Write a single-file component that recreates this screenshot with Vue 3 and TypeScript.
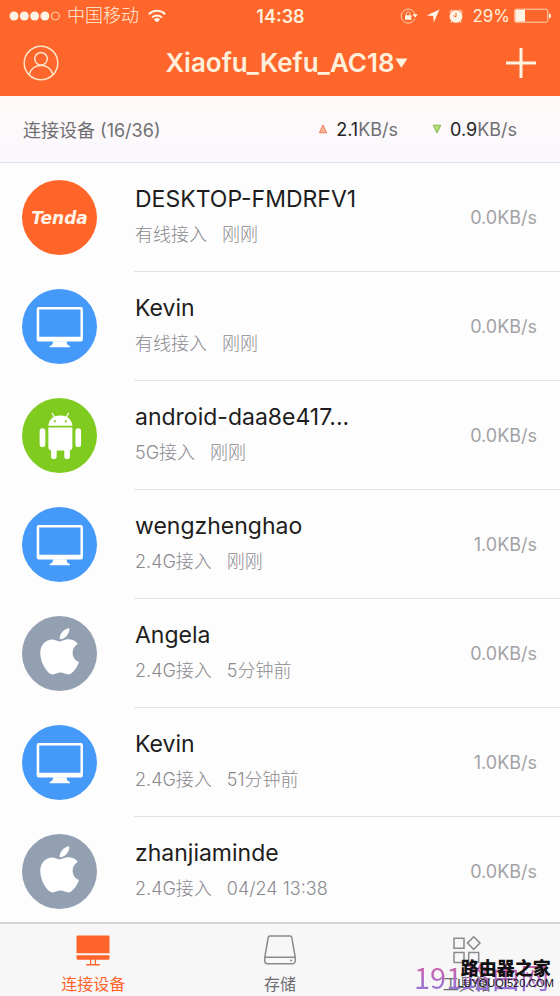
<script setup lang="ts">
import { ref } from 'vue'

type Kind = 'tenda' | 'desktop' | 'android' | 'apple'

interface Device {
  id: number
  name: string
  kind: Kind
  access: string
  seen: string
  rate: string
}

const devices: Device[] = [
  { id: 1, name: 'DESKTOP-FMDRFV1', kind: 'tenda', access: '有线接入', seen: '刚刚', rate: '0.0KB/s' },
  { id: 2, name: 'Kevin', kind: 'desktop', access: '有线接入', seen: '刚刚', rate: '0.0KB/s' },
  { id: 3, name: 'android-daa8e417...', kind: 'android', access: '5G接入', seen: '刚刚', rate: '0.0KB/s' },
  { id: 4, name: 'wengzhenghao', kind: 'desktop', access: '2.4G接入', seen: '刚刚', rate: '1.0KB/s' },
  { id: 5, name: 'Angela', kind: 'apple', access: '2.4G接入', seen: '5分钟前', rate: '0.0KB/s' },
  { id: 6, name: 'Kevin', kind: 'desktop', access: '2.4G接入', seen: '51分钟前', rate: '1.0KB/s' },
  { id: 7, name: 'zhanjiaminde', kind: 'apple', access: '2.4G接入', seen: '04/24 13:38', rate: '0.0KB/s' },
]

const tabs = ['连接设备', '存储', '工具箱']
const activeTab = ref(0)
</script>

<template>
  <div class="app">
    <header class="top">
      <div class="status">
        <div class="status-side">
          <svg class="dots" width="52" height="12" viewBox="0 0 52 12" aria-hidden="true">
            <circle cx="5" cy="6" r="4.5" /><circle cx="15.3" cy="6" r="4.5" />
            <circle cx="25.6" cy="6" r="4.5" /><circle cx="35.9" cy="6" r="4.5" />
            <circle class="hollow" cx="46.4" cy="6" r="4" />
          </svg>
          <span class="carrier">中国移动</span>
          <svg width="20" height="14" viewBox="0 0 20 14" aria-hidden="true">
            <path class="wave" d="M1.8 5.2a11.7 11.7 0 0 1 16.4 0M5 8.6a7.2 7.2 0 0 1 10 0" />
            <path class="solid" d="M10 13.6 6.9 10.5a4.5 4.5 0 0 1 6.2 0z" />
          </svg>
        </div>
        <span class="clock">14:38</span>
        <div class="status-side right">
          <svg width="18" height="16" viewBox="0 0 18 16" aria-hidden="true">
            <path class="thin" d="M14.8 10.6A7 7 0 1 1 15 6.2" />
            <path class="solid" d="M12.4 6.2h5.4L15.1 9.6zM5 7.2h6.4v4.6H5z" />
            <path class="thin" d="M6.4 7.4V5.6a1.8 1.8 0 0 1 3.6 0v1.8" />
          </svg>
          <svg width="14" height="14" viewBox="0 0 14 14" aria-hidden="true">
            <path class="solid" d="M13.5.5 7.8 13.4 7.2 6.9.6 6.4z" />
          </svg>
          <svg width="16" height="16" viewBox="0 0 16 16" aria-hidden="true">
            <circle class="solid" cx="8" cy="8.4" r="6.4" />
            <path class="bells" d="M1.2 4.4 4.4 1.4M14.8 4.4 11.6 1.4M3.8 13 2.8 14.6M12.2 13l1 1.6" />
            <path class="hands" d="M8 4.6v4.2l-2.6-1" />
          </svg>
          <span class="percent">29%</span>
          <svg width="38" height="16" viewBox="0 0 38 16" aria-hidden="true">
            <rect class="thin" x=".8" y="1.2" width="33" height="13" rx="1.5" />
            <rect class="solid" x="1.4" y="1.8" width="9.6" height="11.8" />
            <path class="solid" d="M35 5.5c1.3 0 2 1 2 2.4s-.7 2.4-2 2.4z" />
          </svg>
        </div>
      </div>
      <div class="nav">
        <button type="button" class="nav-btn" aria-label="账户">
          <svg width="36" height="36" viewBox="0 0 36 36">
            <circle class="line" cx="18" cy="18" r="16.8" />
            <circle class="line" cx="18" cy="13.8" r="6.3" />
            <path class="line" d="M6 29.6c1.8-5.4 6.3-9 12-9s10.2 3.6 12 9" />
          </svg>
        </button>
        <button type="button" class="title">
          <span>Xiaofu_Kefu_AC18</span>
          <svg width="13" height="11" viewBox="0 0 13 11" aria-hidden="true"><path class="solid" d="M.3.4h12.2L6.4 9.8z" /></svg>
        </button>
        <button type="button" class="nav-btn end" aria-label="添加">
          <svg width="32" height="32" viewBox="0 0 32 32"><path class="plus" d="M16 1v30M1 16h30" /></svg>
        </button>
      </div>
    </header>

    <section class="summary">
      <h1 class="count">连接设备 (16/36)</h1>
      <div class="traffic">
        <svg width="10" height="10" viewBox="0 0 10 10" aria-hidden="true"><path class="up" d="M5 1 8.6 8.8H1.4z" /></svg>
        <span><b>2.1</b>KB/s</span>
      </div>
      <div class="traffic">
        <svg width="10" height="10" viewBox="0 0 10 10" aria-hidden="true"><path class="down" d="M1.2 1.2h7.6L5 9z" /></svg>
        <span><b>0.9</b>KB/s</span>
      </div>
    </section>

    <ul class="list">
      <li v-for="d in devices" :key="d.id" class="row">
        <div class="avatar" :class="d.kind">
          <span v-if="d.kind === 'tenda'" class="brand">Tenda</span>
          <svg v-else-if="d.kind === 'desktop'" viewBox="0 0 74 74" aria-hidden="true">
            <path fill="#fff" fill-rule="evenodd" d="M16.5 17.8h41.6a2 2 0 0 1 2 2V49.8a2 2 0 0 1-2 2H16.5a2 2 0 0 1-2-2V19.8a2 2 0 0 1 2-2zM17 20.3V47.2H57.7V20.3z" />
            <path fill="#fff" d="M30.5 51.5h13.6c-.2 2.500.5 3.700 3.200 4.700v1.300H27.3v-1.300c2.700-1 3.400-2.200 3.200-4.700z" />
          </svg>
          <svg v-else-if="d.kind === 'android'" viewBox="0 0 74 74" aria-hidden="true">
            <path fill="#fff" d="M26 27.3c.3-4.700 3.200-8 7-9.300 2.700-1 7-1 9.700 0 3.800 1.300 6.700 4.600 7 9.300zM26 29h23.700v19.700a3 3 0 0 1-3 3H29a3 3 0 0 1-3-3z" />
            <path stroke="#fff" stroke-width="1.2" stroke-linecap="round" d="m32.3 19-2.500-3.800M43.4 19l2.500-3.800" />
            <path stroke="#fff" stroke-width="5.6" stroke-linecap="round" d="M20.2 32.6v13M55.5 32.6v13M31.4 48v9.500M44.5 48v9.500" />
            <circle cx="32.5" cy="23" r="1.1" fill="#7fcb1f" /><circle cx="43.2" cy="23" r="1.1" fill="#7fcb1f" />
          </svg>
          <svg v-else viewBox="0 0 74 74" aria-hidden="true">
            <path fill="#fff" transform="translate(17.6 8.9) scale(.1015)" d="M318.7 268.7c-.2-36.7 16.4-64.4 50-84.8-18.8-26.9-47.2-41.7-84.7-44.6-35.5-2.8-74.3 20.7-88.5 20.7-15 0-49.4-19.7-76.4-19.7C63.3 141.2 4 184.8 4 273.5q0 39.3 14.4 81.2c12.8 36.7 59 126.7 107.2 125.2 25.2-.6 43-17.9 75.8-17.9 31.8 0 48.3 17.9 76.4 17.9 48.6-.7 90.4-82.5 102.6-119.3-65.2-30.7-61.7-90-61.7-91.9zm-56.6-164.2c27.3-32.4 24.8-61.9 24-72.5-24.1 1.4-52 16.4-67.9 34.9-17.5 19.8-27.8 44.3-25.6 71.9 26.1 2 49.9-11.4 69.5-34.3z" />
          </svg>
        </div>
        <div class="body">
          <div class="info">
            <h2 class="name">{{ d.name }}</h2>
            <p class="meta"><span>{{ d.access }}</span><span>{{ d.seen }}</span></p>
          </div>
          <span class="rate">{{ d.rate }}</span>
        </div>
      </li>
    </ul>

    <nav class="tabs">
      <button v-for="(t, i) in tabs" :key="t" type="button" class="tab" :class="{ active: activeTab === i }" @click="activeTab = i">
        <svg v-if="i === 0" width="34" height="32" viewBox="0 0 34 32" aria-hidden="true">
          <path fill="currentColor" d="M1.5.5h31a1 1 0 0 1 1 1V18.2H.5V1.5a1 1 0 0 1 1-1zM.5 20.2h33v3a1.5 1.5 0 0 1-1.5 1.5H2a1.5 1.5 0 0 1-1.5-1.5zM10.2 29h13.6v1.4H10.2zM14 24.5h1.3V29H14zM18.7 24.5H20V29h-1.3z" />
        </svg>
        <svg v-else-if="i === 1" width="34" height="32" viewBox="0 0 34 32" aria-hidden="true">
          <path class="outline" d="M7 1h20a1.800 1.800 0 0 1 1.800 1.500L32.200 22v4a2.700 2.700 0 0 1-2.700 2.700h-25A2.700 2.700 0 0 1 1.800 26v-4L5.200 2.500A1.800 1.800 0 0 1 7 1zM1.900 22.200h30.200M27 25.400h2" />
        </svg>
        <svg v-else width="34" height="32" viewBox="0 0 34 32" aria-hidden="true">
          <path class="outline" d="M4 3.2h10v10H4zM23.7 1.8l6.3 6.3-6.3 6.3-6.3-6.3zM4 17.6h10v10H4zM18.7 17.6h10v10h-10z" />
        </svg>
        <span>{{ t }}</span>
      </button>
      <div class="marks">
        <span class="mark-back">191路由网</span>
        <span class="mark-front"><strong>路由器之家</strong><em>LUYOUQI520.COM</em></span>
      </div>
    </nav>
  </div>
</template>

<style>
body {
  margin: 0;
  background: #fefefe;
}
</style>

<style scoped>
.app {
  display: flex;
  flex-direction: column;
  height: 100vh;
  overflow: hidden;
  background: #fefdfe;
  color: #222;
  font-family: Inter, "Noto Sans CJK SC", sans-serif;
  font-weight: 400;
}
button {
  border: 0;
  padding: 0;
  background: none;
  color: inherit;
  font: inherit;
  cursor: pointer;
}
svg {
  display: block;
  fill: none;
}
.top {
  height: 96px;
  flex: none;
  background: #ff662c;
  color: #fff0dc;
}
.solid, .dots circle { fill: #fff3e4; }
.dots .hollow, .thin { fill: none; stroke: #ffd9b8; stroke-width: 1; }
.wave { stroke: #fff3e4; stroke-width: 2; }
.bells { stroke: #fff3e4; stroke-width: 1; }
.hands { stroke: #ff662c; stroke-width: 1; }
.line { stroke: #ffe3c8; stroke-width: 1.5; }
.plus { stroke: #fff3e4; stroke-width: 3; }
.status {
  display: grid;
  grid-template-columns: 1fr auto 1fr;
  align-items: center;
  height: 32px;
  padding: 0 8px 0 9px;
}
.status-side {
  display: flex;
  align-items: center;
  gap: 8px;
}
.dots { margin-right: -2px; }
.right { justify-content: flex-end; }
.carrier {
  font-size: 18px;
  font-weight: 300;
  line-height: 24px;
}
.clock {
  font-size: 18px;
  font-weight: 600;
}
.percent {
  font-size: 17px;
  font-weight: 400;
  margin-right: -4px;
}
.nav {
  display: grid;
  grid-template-columns: 1fr auto 1fr;
  align-items: center;
  height: 62px;
  padding: 0 23px;
}
.nav-btn { justify-self: start; }
.end { justify-self: end; }
.title {
  display: flex;
  align-items: center;
  padding-left: 13px;
  font-size: 26px;
  font-weight: 600;
  line-height: 32px;
}
.summary {
  display: flex;
  align-items: center;
  flex: none;
  height: 67px;
  box-sizing: border-box;
  padding: 0 43px 0 23px;
  border-bottom: 1px solid #e4e0e5;
  background: linear-gradient(#fff9f7, #faf8fe);
  color: #707073;
}
.count {
  flex: 1;
  margin: 0;
  font-size: 18px;
  font-weight: 400;
}
.traffic {
  display: flex;
  align-items: center;
  gap: 8px;
  margin-left: 34px;
  font-size: 18px;
}
.traffic b {
  color: #222;
  font-weight: 400;
}
.up { fill: #f8b49a; stroke: #ee7c58; }
.down { fill: #b4dd79; stroke: #7fb948; }
.list {
  flex: 1;
  min-height: 0;
  margin: 0;
  padding: 0;
  overflow-y: auto;
  scrollbar-width: none;
  list-style: none;
}
.row {
  display: flex;
  height: 109px;
  padding-left: 22px;
}
.avatar {
  display: flex;
  align-items: center;
  justify-content: center;
  flex: none;
  width: 75px;
  height: 75px;
  margin: 17px 37px 0 0;
  border-radius: 50%;
}
.avatar svg { width: 100%; height: 100%; }
.tenda { background: #ff6428; }
.desktop { background: #459af9; }
.android { background: #7fcb1f; }
.apple { background: #92a0b2; }
.brand {
  color: #fff3e8;
  font-family: "DejaVu Sans", sans-serif;
  font-size: 17px;
  font-style: italic;
  font-weight: 700;
}
.body {
  display: flex;
  align-items: center;
  flex: 1;
  min-width: 0;
  box-sizing: border-box;
  padding-right: 23px;
  border-bottom: 1px solid #e3e2e4;
}
.row:last-child .body { border-color: transparent; }
.info {
  flex: 1;
  min-width: 0;
  padding: 0 0 4px 1px;
}
.name {
  margin: 0 0 7px;
  color: #1d1d20;
  font-size: 23px;
  font-weight: 400;
  line-height: 32px;
}
.meta {
  display: flex;
  gap: 15px;
  margin: 0;
  color: #8a8a8e;
  font-size: 18px;
  font-weight: 300;
  line-height: 26px;
}
.rate {
  color: #a2a2a5;
  font-size: 18px;
}
.tabs {
  position: relative;
  display: grid;
  grid-template-columns: repeat(3, 1fr);
  flex: none;
  height: 74px;
  box-sizing: border-box;
  border-top: 2px solid #d3d2d4;
  background: #f7f7f8;
}
.tab {
  display: flex;
  flex-direction: column;
  align-items: center;
  gap: 5px;
  padding-top: 11px;
  color: #6d6d70;
  font-size: 16px;
  line-height: 24px;
}
.active { color: #ff642a; }
.outline { stroke: #8b8b8e; stroke-width: 1.5; }
.marks {
  position: absolute;
  right: 0;
  bottom: 0;
  width: 146px;
  height: 46px;
  pointer-events: none;
  white-space: nowrap;
}
.mark-back {
  position: absolute;
  left: 0;
  bottom: 0;
  background: linear-gradient(#ea5d93, #8576e6);
  background-clip: text;
  color: transparent;
  font-family: "Noto Sans CJK SC", sans-serif;
  font-size: 29px;
  font-weight: 400;
  line-height: 40px;
}
.mark-front {
  position: absolute;
  right: 6px;
  bottom: 6px;
  display: flex;
  flex-direction: column;
  align-items: center;
  color: #111;
}
.mark-front strong {
  font-family: "Noto Sans CJK SC", sans-serif;
  font-size: 18px;
  font-weight: 900;
  line-height: 20px;
}
.mark-front em {
  font-family: "Liberation Sans", sans-serif;
  font-size: 11px;
  font-style: normal;
  font-weight: 400;
  line-height: 13px;
}
</style>
